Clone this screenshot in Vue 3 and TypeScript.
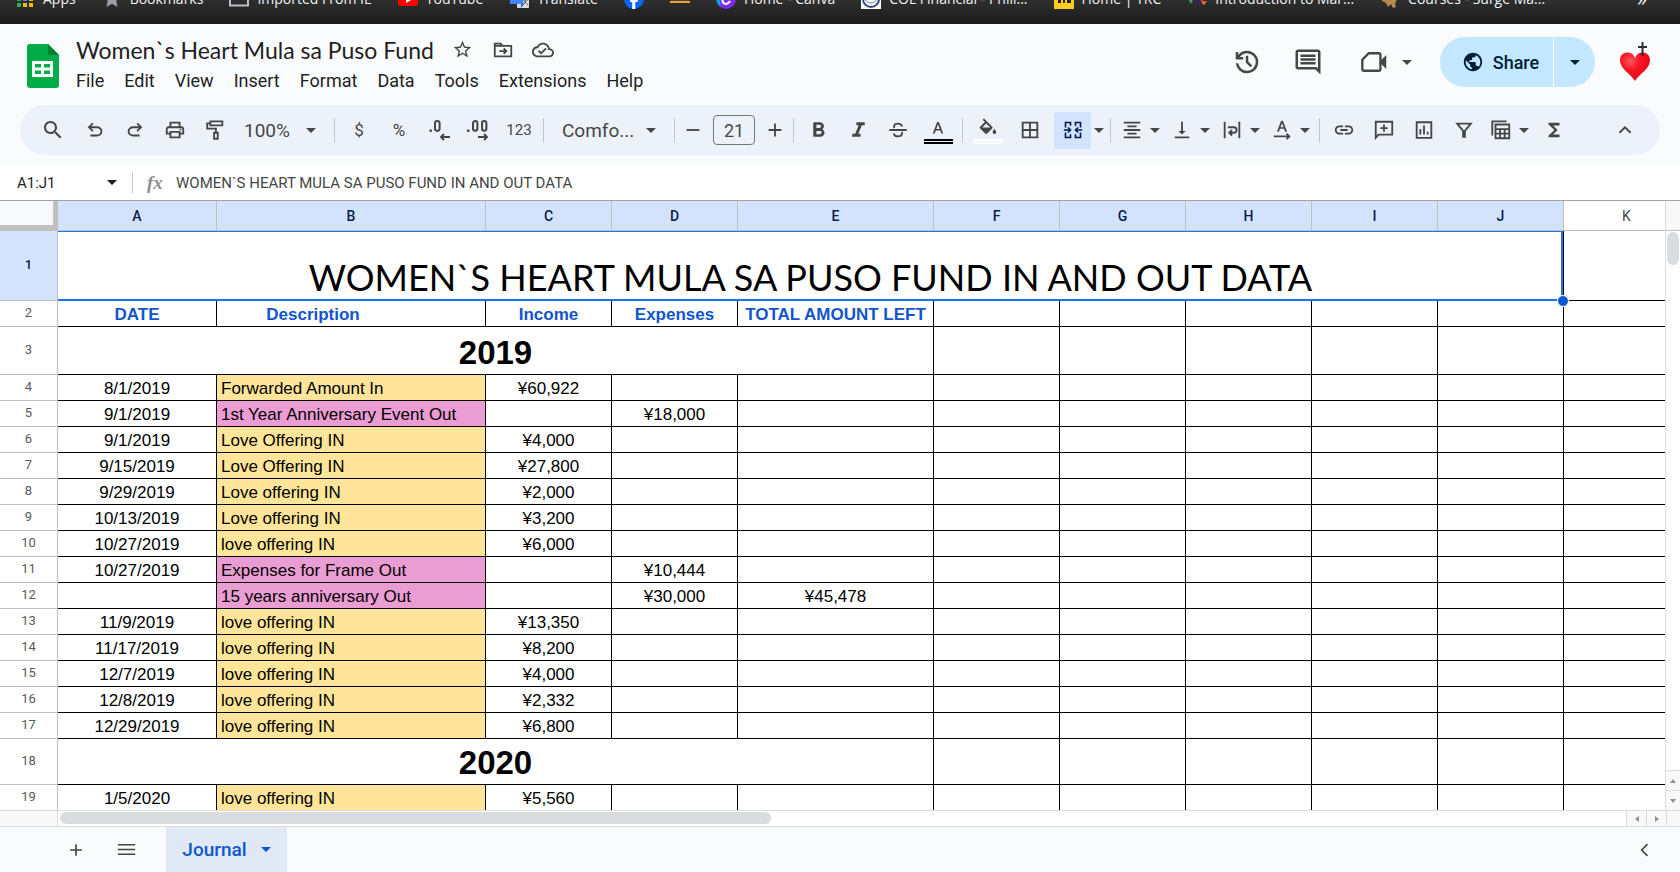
<script setup lang="ts">
import { h, ref } from 'vue'

type Glyph = { fill?: string; line?: string; box?: string }

const glyphs: Record<string, Glyph> = {
  search: { fill: 'M15.5 14h-.79l-.28-.27C15.41 12.59 16 11.11 16 9.5 16 5.91 13.09 3 9.5 3S3 5.91 3 9.5 5.91 16 9.5 16c1.61 0 3.09-.59 4.23-1.57l.27.28v.79l5 4.99L20.49 19l-4.99-5zm-6 0C7.01 14 5 11.99 5 9.5S7.01 5 9.5 5 14 7.01 14 9.5 11.99 14 9.5 14z' },
  undo: { fill: 'M7 19v-2h7.1q1.575 0 2.737-1Q18 15 18 13.5T16.837 11Q15.675 10 14.1 10H7.8l2.6 2.6L9 14 4 9l5-5 1.4 1.4L7.8 8h6.3q2.425 0 4.163 1.575Q20 11.15 20 13.5t-1.737 3.925Q16.525 19 14.1 19Z' },
  redo: { fill: 'M9.9 19q-2.425 0-4.163-1.575Q4 15.85 4 13.5t1.737-3.925Q7.475 8 9.9 8h6.3l-2.6-2.6L15 4l5 5-5 5-1.4-1.4 2.6-2.6H9.9q-1.575 0-2.737 1Q6 12 6 13.5T7.163 16Q8.325 17 9.9 17H17v2Z' },
  print: { fill: 'M19 8h-1V3H6v5H5c-1.66 0-3 1.34-3 3v6h4v4h12v-4h4v-6c0-1.66-1.34-3-3-3zM8 5h8v3H8V5zm8 14H8v-4h8v4zm2-4v-2H6v2H4v-4c0-.55.45-1 1-1h14c.55 0 1 .45 1 1v4h-2zm-1-3.5a1 1 0 1 0 2 0a1 1 0 1 0 -2 0z' },
  paint: { line: 'M7 2.5h13v4.5H7zM7 4.7H3.5v5.8h9.5v4M11 15h4v6.5h-4z' },
  decLess: { fill: 'M2.5 11.5h2.4v2.4H2.5z', line: 'M8 5.2a2.3 2.3 0 0 1 4.6 0v5.4a2.3 2.3 0 0 1-4.6 0zM23 19h-9M17 16l-3 3 3 3' },
  decMore: { fill: 'M0 11.5h2.4v2.4H0z', line: 'M6 5.2a2.2 2.2 0 0 1 4.4 0v5.4a2.2 2.2 0 0 1-4.4 0zM15 5.2a2.2 2.2 0 0 1 4.4 0v5.4a2.2 2.2 0 0 1-4.4 0zM11 19h9M17 16l3 3-3 3' },
  minus: { line: 'M5 12h14' },
  plus: { line: 'M12 5v14M5 12h14' },
  bold: { fill: 'M15.6 10.79c.97-.67 1.65-1.77 1.65-2.79 0-2.26-1.75-4-4-4H7v14h7.04c2.09 0 3.71-1.7 3.71-3.79 0-1.52-.86-2.82-2.15-3.42zM10 6.5h3c.83 0 1.5.67 1.5 1.5s-.67 1.5-1.5 1.5h-3v-3zm3.5 9H10v-3h3.5c.83 0 1.5.67 1.5 1.5s-.67 1.5-1.5 1.5z' },
  italic: { fill: 'M10 4v3h2.21l-3.42 8H6v3h8v-3h-2.21l3.42-8H18V4z' },
  strike: { line: 'M2.5 12h19M16.5 8.2C16 6.300 14.500 5 12 5 9.500 5 7.700 6.300 7.700 8.300c0 .6.100 1 .4 1.500M7.300 15.800C7.800 17.900 9.500 19 12 19c2.700 0 4.400-1.300 4.400-3.400 0-.6-.1-1-.3-1.400' },
  textColor: { box: '0 -4 24 24', fill: 'M11 1.500h2L17.700 14h-2.100l-1.200-3.300H9.600L8.400 14H6.300zM10.200 9h3.600L12 4z' },
  fillColor: { box: '0 -3 24 24', fill: 'M16.560 7.500 7.620-1.400 6.200 0l2.400 2.400-5.200 5.100a1.500 1.500 0 0 0 0 2.100l5.500 5.500c.3.300.7.400 1.100.4s.8-.1 1.100-.4l5.500-5.500c.5-.600.5-1.500 0-2.100zM5.600 8.500 10 4.100l4.400 4.400zM19 10s-2 2.200-2 3.500a2 2 0 0 0 4 0c0-1.300-2-3.500-2-3.500z' },
  borders: { fill: 'M3 3v18h18V3H3zm8 16H5v-6h6v6zm0-8H5V5h6v6zm8 8h-6v-6h6v6zm0-8h-6V5h6v6z' },
  merge: { line: 'M3 9V3h6v4M21 9V3h-6v4M3 15v6h6v-4M21 15v6h-6v-4M1 12h8M6 9l3 3-3 3M23 12h-8M18 9l-3 3 3 3' },
  align: { fill: 'M7 15v2h10v-2H7zm-4 6h18v-2H3v2zm0-8h18v-2H3v2zm4-6v2h10V7H7zM3 3v2h18V3H3z' },
  valign: { fill: 'M16 13h-3V3h-2v10H8l4 4 4-4zM4 19v2h16v-2H4z' },
  wrap: { line: 'M4 3v18M20 3v18M7.500 9h6.500a3 3 0 0 1 0 6h-5M12 12l-3 3 3 3' },
  rotate: { fill: 'M11 2h2l4.500 12h-2.100l-1.200-3.300H9.800L8.600 14H6.500zM10.300 9h3.400L12 4.500z', line: 'M3 19h16M17 16l3 3-3 3' },
  link: { fill: 'M3.900 12c0-1.710 1.390-3.100 3.100-3.100h4V7H7c-2.760 0-5 2.240-5 5s2.240 5 5 5h4v-1.900H7c-1.710 0-3.100-1.390-3.100-3.100zM8 13h8v-2H8v2zm9-6h-4v1.900h4c1.710 0 3.100 1.390 3.100 3.100s-1.390 3.100-3.100 3.100h-4V17h4c2.760 0 5-2.240 5-5s-2.240-5-5-5z' },
  addComment: { line: 'M3 3h18v14H6l-3 3.500zM12 6v8M8 10h8' },
  chart: { line: 'M4 3.500h16v17H4zM8 17v-6M12 17V7M16 17v-3' },
  filter: { line: 'M4.500 5h15L13 13v6.500h-2V13z' },
  tables: { line: 'M6 6h15v15H6zM2.500 18V2.500H18M6 11h15M6 16h15M11 11v10M16 11v10' },
  sigma: { fill: 'M18 4H6v2l6.500 6L6 18v2h12v-3h-7l5-5-5-5h7z' },
  up: { line: 'M6 15l6-6 6 6' },
  left: { line: 'M15 5l-7 7 7 7' },
  caret: { fill: 'M0 0h10L5 5z', box: '0 0 10 5' },
  star: { fill: 'M22 9.240l-7.190-.620L12 2 9.190 8.630 2 9.240l5.460 4.730L5.820 21 12 17.270 18.180 21l-1.630-7.030L22 9.240zM12 15.400l-3.760 2.270 1-4.280-3.320-2.880 4.380-.380L12 6.100l1.710 4.040 4.380.380-3.320 2.880 1 4.280L12 15.400z' },
  folder: { line: 'M3 5h6.500l2 2.500H21V19H3zM3 7.500h9M8 13.200h7.500M12.700 10.300l3 2.900-3 2.900' },
  cloud: { fill: 'M19.350 10.040C18.670 6.590 15.640 4 12 4 9.110 4 6.600 5.640 5.350 8.040 2.340 8.360 0 10.910 0 14c0 3.310 2.690 6 6 6h13c2.760 0 5-2.240 5-5 0-2.640-2.050-4.780-4.650-4.960zM19 18H6c-2.210 0-4-1.790-4-4s1.790-4 4-4h.710C7.370 7.690 9.480 6 12 6c3.040 0 5.500 2.460 5.500 5.500v.500H19c1.660 0 3 1.340 3 3s-1.340 3-3 3zm-9-3.820l-2.090-2.090L6.500 13.500 10 17l6.010-6.010-1.410-1.410z' },
  history: { fill: 'M12 21q-3.450 0-6.013-2.288Q3.425 16.425 3.050 13H5.100q.35 2.600 2.313 4.300Q9.375 19 12 19q2.925 0 4.963-2.038Q19 14.925 19 12t-2.037-4.963Q14.925 5 12 5q-1.725 0-3.225.8T6.250 8H9v2H3V4h2v2.350q1.275-1.600 3.113-2.475Q9.950 3 12 3q1.875 0 3.513.713 1.637.712 2.850 1.924 1.212 1.213 1.925 2.850Q21 10.125 21 12t-.712 3.513q-.713 1.637-1.925 2.850-1.213 1.212-2.850 1.925Q13.875 21 12 21Zm2.800-4.800L11 12.400V7h2v4.600l3.200 3.200Z' },
  comments: { fill: 'M21.990 4c0-1.100-.890-2-1.990-2H4c-1.100 0-2 .900-2 2v12c0 1.100.900 2 2 2h14l4 4-.010-18zM20 4v13.170L18.830 16H4V4h16zM6 12h12v2H6zm0-3h12v2H6zm0-3h12v2H6z' },
  video: { fill: 'M18 10.500L22.500 6v12L18 13.500z', line: 'M7.500 4.500H16a1.500 1.500 0 0 1 1.500 1.500v12a1.500 1.500 0 0 1-1.500 1.500H3.500A1.500 1.500 0 0 1 2 18v-8z' },
  globe: { fill: 'M12 2C6.480 2 2 6.480 2 12s4.480 10 10 10 10-4.480 10-10S17.520 2 12 2zm-1 17.930c-3.950-.490-7-3.850-7-7.930 0-.620.080-1.210.210-1.790L9 15v1c0 1.100.900 2 2 2v1.930zm6.900-2.540c-.260-.810-1-1.390-1.900-1.390h-1v-3c0-.550-.450-1-1-1H8v-2h2c.550 0 1-.450 1-1V7h2c1.100 0 2-.900 2-2v-.410c2.930 1.190 5 4.060 5 7.410 0 2.080-.800 3.970-2.100 5.390z' },
  list: { line: 'M1 6h22M1 12h22M1 18h22' },
}

const Icon = (props: { name: string; size?: number }) => {
  const g = glyphs[props.name]
  const size = props.size ?? 22
  const isCaret = props.name === 'caret'
  return h('svg', {
    viewBox: g.box ?? '0 0 24 24',
    width: isCaret ? 10 : size,
    height: isCaret ? 5 : size,
    'aria-hidden': 'true',
    class: 'icon',
  }, [
    g.fill ? h('path', { d: g.fill, fill: 'currentColor', 'fill-rule': 'evenodd' }) : null,
    g.line ? h('path', { d: g.line, fill: 'none', stroke: 'currentColor', 'stroke-width': 2 }) : null,
  ])
}
Icon.props = ['name', 'size']

const menus = ['File', 'Edit', 'View', 'Insert', 'Format', 'Data', 'Tools', 'Extensions', 'Help']

const bookmarks = [
  { icon: 'apps', text: 'Apps' },
  { icon: 'star', text: 'Bookmarks' },
  { icon: 'folder', text: 'Imported From IE' },
  { icon: 'youtube', text: 'YouTube' },
  { icon: 'translate', text: 'Translate' },
  { icon: 'facebook', text: '' },
  { icon: 'shop', text: '' },
  { icon: 'canva', text: 'Home - Canva' },
  { icon: 'col', text: 'COL Financial - Phili...' },
  { icon: 'trc', text: 'Home | TRC' },
  { icon: 'intro', text: 'Introduction to Mar...' },
  { icon: 'surge', text: 'Courses - Surge Ma...' },
]

const columns = ['A', 'B', 'C', 'D', 'E', 'F', 'G', 'H', 'I', 'J', 'K']

type Entry = { n: number; date?: string; text?: string; kind?: 'in' | 'out'; income?: string; expense?: string; total?: string; year?: string }

const entries: Entry[] = [
  { n: 3, year: '2019' },
  { n: 4, date: '8/1/2019', text: 'Forwarded Amount In', kind: 'in', income: '¥60,922' },
  { n: 5, date: '9/1/2019', text: '1st Year Anniversary Event Out', kind: 'out', expense: '¥18,000' },
  { n: 6, date: '9/1/2019', text: 'Love Offering IN', kind: 'in', income: '¥4,000' },
  { n: 7, date: '9/15/2019', text: 'Love Offering IN', kind: 'in', income: '¥27,800' },
  { n: 8, date: '9/29/2019', text: 'Love offering IN', kind: 'in', income: '¥2,000' },
  { n: 9, date: '10/13/2019', text: 'Love offering IN', kind: 'in', income: '¥3,200' },
  { n: 10, date: '10/27/2019', text: 'love offering IN', kind: 'in', income: '¥6,000' },
  { n: 11, date: '10/27/2019', text: 'Expenses for Frame Out', kind: 'out', expense: '¥10,444' },
  { n: 12, date: '', text: '15 years anniversary Out', kind: 'out', expense: '¥30,000', total: '¥45,478' },
  { n: 13, date: '11/9/2019', text: 'love offering IN', kind: 'in', income: '¥13,350' },
  { n: 14, date: '11/17/2019', text: 'love offering IN', kind: 'in', income: '¥8,200' },
  { n: 15, date: '12/7/2019', text: 'love offering IN', kind: 'in', income: '¥4,000' },
  { n: 16, date: '12/8/2019', text: 'love offering IN', kind: 'in', income: '¥2,332' },
  { n: 17, date: '12/29/2019', text: 'love offering IN', kind: 'in', income: '¥6,800' },
  { n: 18, year: '2020' },
  { n: 19, date: '1/5/2020', text: 'love offering IN', kind: 'in', income: '¥5,560' },
]

const fontSize = ref('21')
const formula = ref('WOMEN`S HEART MULA SA PUSO FUND IN AND OUT DATA')
</script>

<template>
  <div class="page">
    <nav class="bookmarks" aria-label="Bookmarks">
      <div class="bookmark-row">
        <a v-for="b in bookmarks" :key="b.icon" href="#" class="bookmark" :aria-label="b.text || b.icon">
          <svg class="favicon" viewBox="0 0 20 20" aria-hidden="true">
            <template v-if="b.icon === 'apps'">
              <path d="M2 2h4v4H2zM8 2h4v4H8zM14 2h4v4h-4z" fill="#ea4335" />
              <path d="M2 8h4v4H2z" fill="#34a853" /><path d="M8 8h4v4H8z" fill="#4285f4" />
              <path d="M14 8h4v4h-4z" fill="#fbbc04" /><path d="M2 14h4v4H2z" fill="#34a853" />
              <path d="M8 14h4v4H8zM14 14h4v4h-4z" fill="#fbbc04" />
            </template>
            <path v-else-if="b.icon === 'star'" d="M10 1l2.700 6 6.300.6-4.800 4.200L15.600 18 10 14.700 4.400 18l1.400-6.200L1 7.600 7.300 7z" fill="#9aa0a6" />
            <path v-else-if="b.icon === 'folder'" d="M1 3h7l2 2h9v11.500H1z" fill="none" stroke="#bdc1c6" stroke-width="2" />
            <template v-else-if="b.icon === 'youtube'">
              <rect y="3" width="20" height="14" rx="3" fill="#f00" /><path d="M8 7l6 3.500-6 3.500z" fill="#fff" />
            </template>
            <template v-else-if="b.icon === 'translate'">
              <rect x="8" y="6" width="12" height="13" rx="1" fill="#dadce0" />
              <path d="M1 1h10l4 14H1z" fill="#4285f4" /><path d="M12 15h3l-3 4z" fill="#1a5fd0" />
              <path d="M14 11h5M17 10c0 3-1 4-3 6M15 12l4 4" stroke="#5f6368" fill="none" />
            </template>
            <template v-else-if="b.icon === 'facebook'">
              <circle cx="10" cy="10" r="10" fill="#0866ff" />
              <path d="M8.200 20v-7H6v-3h2.200V8c0-2.500 1.300-4 4-4h1.800v3h-1.500c-.9 0-1.200.5-1.200 1.300V10H14l-.4 3h-2.300v7z" fill="#fff" />
            </template>
            <template v-else-if="b.icon === 'shop'">
              <path d="M1 10h18v2H1z" fill="#22516b" /><path d="M0 12h20v2H0z" fill="#ff9d16" />
            </template>
            <template v-else-if="b.icon === 'canva'">
              <circle cx="10" cy="10" r="10" fill="#7d2ae8" /><path d="M1 6a10 10 0 0 0 4 12C3 13 5 6 9 0 5 0 2 3 1 6z" fill="#00a8d8" />
              <path d="M14 7c-1-4-7-2-7.500 4-.2 5 5 5 7.500 1" stroke="#fff" stroke-width="2" fill="none" />
            </template>
            <template v-else-if="b.icon === 'col'">
              <rect width="20" height="20" fill="#fff" />
              <ellipse cx="10" cy="10" rx="8" ry="8" fill="none" stroke="#31507f" stroke-width="2" />
              <ellipse cx="10" cy="9" rx="6" ry="5" fill="none" stroke="#6f88ad" />
            </template>
            <template v-else-if="b.icon === 'trc'">
              <rect width="20" height="20" fill="#ffc926" /><path d="M4 11h3v3H4zM9 11h2v3H9zM13 11h4v3h-4z" fill="#222" />
            </template>
            <template v-else-if="b.icon === 'intro'">
              <path d="M0 8h7l-3 7z" fill="#34a853" /><path d="M6 15l4-7 3 7z" fill="#3b1f5b" />
              <path d="M11 8h5l1 8z" fill="#e0217d" /><path d="M14 13l6-1-3 4z" fill="#f4792b" />
            </template>
            <path v-else d="M2 8l6 2 4-2 5 2-2 5 1 3-3 1-2-4-3 3-2-4-4-2z" fill="#b58a4b" />
          </svg>
          <span v-if="b.text">{{ b.text }}</span>
        </a>
        <button class="more" aria-label="More bookmarks">»</button>
      </div>
    </nav>

    <header class="header">
      <svg class="logo" viewBox="0 0 32 44" aria-hidden="true">
        <path d="M3 0h18l11 11v30a3 3 0 0 1-3 3H3a3 3 0 0 1-3-3V3a3 3 0 0 1 3-3z" fill="#00ac47" />
        <path d="M21 0l11 11H21z" fill="#00832d" />
        <path d="M5 17h21v16H5zM8 20v3.500h6V20zM17 20v3.500h6V20zM8 26.500V30h6v-3.500zM17 26.500V30h6v-3.500z" fill="#fff" fill-rule="evenodd" />
      </svg>
      <div class="titles">
        <div class="title-row">
          <h1>Women`s Heart Mula sa Puso Fund</h1>
          <button aria-label="Star"><Icon name="star" :size="21" /></button>
          <button aria-label="Move"><Icon name="folder" /></button>
          <button aria-label="Saved to Drive"><Icon name="cloud" /></button>
        </div>
        <nav class="menus" aria-label="Menu bar">
          <button v-for="m in menus" :key="m">{{ m }}</button>
        </nav>
      </div>
      <div class="actions">
        <button aria-label="Version history"><Icon name="history" :size="30" /></button>
        <button aria-label="Comments"><Icon name="comments" :size="30" /></button>
        <button class="meet" aria-label="Join a call"><Icon name="video" :size="28" /><Icon name="caret" /></button>
        <div class="share">
          <button class="share-main"><Icon name="globe" :size="22" />Share</button>
          <button class="share-more" aria-label="Share options"><Icon name="caret" /></button>
        </div>
        <button class="avatar" aria-label="Account">
          <svg viewBox="0 0 32 40" width="32" height="40" aria-hidden="true">
            <defs>
              <radialGradient id="heart" cx=".35" cy=".3" r=".8">
                <stop offset="0" stop-color="#ff5a5f" /><stop offset=".4" stop-color="#fb1322" /><stop offset="1" stop-color="#d80a18" />
              </radialGradient>
            </defs>
            <path d="M16 39C13 33 1 27 1 18.500C1 9 13 8 16 16C19 8 31 9 31 18.500C31 27 19 33 16 39z" fill="url(#heart)" />
            <path d="M23.500 0v14M19 5h9" stroke="#2b2b33" stroke-width="2" />
          </svg>
        </button>
      </div>
    </header>

    <div class="toolbar" role="toolbar" aria-label="Main toolbar">
      <button class="tool first" aria-label="Search menus"><Icon name="search" :size="24" /></button>
      <button class="tool" aria-label="Undo"><Icon name="undo" /></button>
      <button class="tool" aria-label="Redo"><Icon name="redo" /></button>
      <button class="tool" aria-label="Print"><Icon name="print" /></button>
      <button class="tool" aria-label="Paint format"><Icon name="paint" /></button>
      <label class="pick zoom"><select aria-label="Zoom"><option>100%</option></select><Icon name="caret" /></label>
      <i class="sep"></i>
      <button class="tool sym">$</button>
      <button class="tool sym">%</button>
      <button class="tool" aria-label="Decrease decimal places"><Icon name="decLess" :size="24" /></button>
      <button class="tool" aria-label="Increase decimal places"><Icon name="decMore" :size="24" /></button>
      <button class="tool small">123</button>
      <i class="sep"></i>
      <label class="pick font"><select aria-label="Font"><option>Comfo...</option></select><Icon name="caret" /></label>
      <i class="sep"></i>
      <div class="size">
        <button aria-label="Decrease font size"><Icon name="minus" /></button>
        <input v-model="fontSize" aria-label="Font size" />
        <button aria-label="Increase font size"><Icon name="plus" /></button>
      </div>
      <i class="sep"></i>
      <button class="tool" aria-label="Bold"><Icon name="bold" :size="25" /></button>
      <button class="tool" aria-label="Italic"><Icon name="italic" :size="25" /></button>
      <button class="tool" aria-label="Strikethrough"><Icon name="strike" /></button>
      <button class="tool color" aria-label="Text color"><Icon name="textColor" /></button>
      <i class="sep"></i>
      <button class="tool wide color fill-color" aria-label="Fill color"><Icon name="fillColor" /></button>
      <button class="tool wide" aria-label="Borders"><Icon name="borders" :size="22" /></button>
      <button class="tool active" aria-label="Merge cells"><Icon name="merge" :size="20" /></button>
      <button class="drop" aria-label="Merge options"><Icon name="caret" /></button>
      <i class="sep"></i>
      <button v-for="t in ['align', 'valign', 'wrap', 'rotate']" :key="t" class="pair" :aria-label="t">
        <Icon :name="t" /><Icon name="caret" />
      </button>
      <i class="sep"></i>
      <button class="tool" aria-label="Insert link"><Icon name="link" /></button>
      <button class="tool" aria-label="Insert comment"><Icon name="addComment" /></button>
      <button class="tool" aria-label="Insert chart"><Icon name="chart" /></button>
      <button class="tool" aria-label="Create a filter"><Icon name="filter" /></button>
      <button class="pair" aria-label="Filter views"><Icon name="tables" /><Icon name="caret" /></button>
      <button class="tool" aria-label="Functions"><Icon name="sigma" /></button>
      <button class="tool hide" aria-label="Hide the menus"><Icon name="up" /></button>
    </div>

    <div class="formula">
      <button class="name-box">A1:J1<Icon name="caret" /></button>
      <i class="sep"></i>
      <label class="fx" for="formula-input">fx</label>
      <input id="formula-input" v-model="formula" class="formula-input" />
    </div>

    <main class="grid">
      <div class="sheet">
        <table>
          <colgroup>
            <col class="c-head"><col class="c-a"><col class="c-b"><col class="c-n"><col class="c-n"><col class="c-e">
            <col v-for="i in 6" :key="i" class="c-n">
          </colgroup>
          <thead>
            <tr>
              <td class="corner"></td>
              <th v-for="c in columns" :key="c" scope="col" :class="{ picked: c !== 'K' }">{{ c }}</th>
            </tr>
          </thead>
          <tbody>
            <tr class="r-title">
              <th scope="row" class="picked">1</th>
              <td colspan="10" class="selected">WOMEN`S HEART MULA SA PUSO FUND IN AND OUT DATA<span class="handle"></span></td>
              <td></td>
            </tr>
            <tr class="r-labels">
              <th scope="row">2</th>
              <td>DATE</td><td class="desc">Description</td><td>Income</td><td>Expenses</td><td>TOTAL AMOUNT LEFT</td>
              <td v-for="i in 6" :key="i"></td>
            </tr>
            <tr v-for="e in entries" :key="e.n" :class="{ 'r-year': e.year, later: e.year === '2020' }">
              <th scope="row">{{ e.n }}</th>
              <td v-if="e.year" colspan="5">{{ e.year }}</td>
              <template v-else>
                <td>{{ e.date }}</td>
                <td :class="e.kind">{{ e.text }}</td>
                <td>{{ e.income }}</td>
                <td>{{ e.expense }}</td>
                <td>{{ e.total }}</td>
              </template>
              <td v-for="i in 6" :key="i"></td>
            </tr>
          </tbody>
        </table>
      </div>
      <div class="vscroll">
        <div class="vtop"></div>
        <div class="vthumb"></div>
        <button class="vbtn" aria-label="Scroll up"><svg width="6" height="4" viewBox="0 0 6 4"><path d="M0 4l3-4 3 4z" /></svg></button>
        <button class="vbtn" aria-label="Scroll down"><svg width="6" height="4" viewBox="0 0 6 4"><path d="M0 0h6L3 4z" /></svg></button>
      </div>
    </main>

    <div class="hscroll">
      <div class="hhead"></div>
      <div class="htrack"><div class="hthumb"></div></div>
      <button class="hbtn" aria-label="Scroll left"><svg width="4" height="6" viewBox="0 0 4 6"><path d="M4 0v6L0 3z" /></svg></button>
      <button class="hbtn" aria-label="Scroll right"><svg width="4" height="6" viewBox="0 0 4 6"><path d="M0 0l4 3-4 3z" /></svg></button>
      <div class="hend"></div>
    </div>

    <footer class="tabs">
      <button class="tab-tool" aria-label="Add sheet"><Icon name="plus" :size="20" /></button>
      <button class="tab-tool" aria-label="All sheets"><Icon name="list" :size="19" /></button>
      <button class="tab">Journal<Icon name="caret" /></button>
      <button class="tab-tool side" aria-label="Show side panel"><Icon name="left" :size="20" /></button>
    </footer>
  </div>
</template>

<style>
body {
  margin: 0;
  overflow: hidden;
}
</style>

<style scoped>
.page {
  display: flex;
  flex-direction: column;
  height: 100vh;
  background: #f9fbfd;
  color: #444746;
  font-family: Roboto, "Liberation Sans", sans-serif;
}
button,
input,
select {
  padding: 0;
  border: 0;
  background: none;
  color: inherit;
  font: inherit;
}
button {
  display: flex;
  align-items: center;
  justify-content: center;
}
.icon {
  display: block;
  flex: none;
  overflow: visible;
}

.bookmarks {
  flex: none;
  height: 24px;
  overflow: hidden;
  background: linear-gradient(#2f2f2f, #1c1c1c);
}
.bookmark-row {
  display: flex;
  align-items: center;
  gap: 26px;
  height: 32px;
  margin-top: -17px;
  padding: 0 33px 0 15px;
  font: 14px/20px "Open Sans", sans-serif;
  color: #f1f3f4;
}
.bookmark {
  display: flex;
  align-items: center;
  gap: 8px;
  color: inherit;
  text-decoration: none;
  white-space: nowrap;
}
.favicon {
  flex: none;
  width: 20px;
  height: 20px;
}
.more {
  margin-left: auto;
  font-size: 20px;
}

.header {
  display: flex;
  flex: none;
  height: 81px;
  padding: 0 27px;
}
.logo {
  flex: none;
  width: 32px;
  height: 44px;
  margin-top: 20px;
}
.titles {
  margin: 10px 0 0 17px;
}
.title-row {
  display: flex;
  align-items: center;
  height: 31px;
}
.title-row button {
  width: 40px;
}
h1 {
  margin: 0 9px 0 0;
  color: #1f1f1f;
  font: 400 23px/30px Lato, sans-serif;
  white-space: nowrap;
}
.menus {
  display: flex;
  gap: 20px;
  height: 30px;
  color: #1f1f1f;
  font-size: 18px;
}
.actions {
  display: flex;
  align-items: center;
  height: 50px;
  margin: 13px 0 0 auto;
}
.actions > button {
  width: 61px;
}
.actions > .meet {
  gap: 14px;
  width: 79px;
  padding-left: 16px;
}
.share {
  display: flex;
  gap: 1px;
  height: 50px;
  margin: 0 22px 0 23px;
  color: #001d35;
  font-size: 18px;
  font-weight: 500;
}
.share button {
  background: #c2e7ff;
}
.share-main {
  gap: 9px;
  width: 113px;
  padding-left: 8px;
  border-radius: 25px 0 0 25px;
}
.share-more {
  width: 41px;
  border-radius: 0 25px 25px 0;
}
.actions > .avatar {
  width: 36px;
}

.toolbar {
  display: flex;
  flex: none;
  align-items: center;
  height: 50px;
  margin: 0 20px 10px;
  padding: 0 15px 0 11px;
  border-radius: 25px;
  background: #edf2fa;
}
.tool {
  flex: none;
  width: 40px;
  height: 37px;
}
.first {
  width: 44px;
}
.wide {
  width: 42px;
}
.sep {
  flex: none;
  width: 1px;
  height: 25px;
  margin: 0 4px;
  background: #c7c7c7;
}
.pick {
  display: flex;
  position: relative;
  align-items: center;
  height: 37px;
  font-size: 19px;
}
.pick select {
  width: 100%;
  appearance: none;
}
.pick svg {
  position: absolute;
  right: 14px;
  pointer-events: none;
}
.zoom {
  width: 95px;
}
.zoom select {
  padding-left: 9px;
}
.font {
  width: 122px;
}
.font select {
  padding-left: 14px;
}
.sym {
  font-size: 17px;
}
.small {
  font-size: 15px;
}
.size {
  display: flex;
  align-items: center;
  gap: 6px;
}
.size button {
  width: 28px;
}
.size input {
  box-sizing: border-box;
  width: 42px;
  height: 30px;
  border: 1px solid #747775;
  border-radius: 4px;
  font-size: 18px;
  text-align: center;
}
.color {
  flex-direction: column;
}
.color::after {
  width: 29px;
  height: 1px;
  border: solid #000;
  border-width: 2px 0;
  content: "";
}
.fill-color::after {
  border-color: #fff;
}
.active {
  width: 37px;
  margin-left: 3px;
  border-radius: 4px 0 0 4px;
  background: #d3e3fd;
  color: #041e49;
}
.drop {
  width: 15px;
  height: 37px;
}
.pair {
  flex: none;
  gap: 7px;
  width: 50px;
  height: 37px;
}
.hide {
  margin-left: auto;
}

.formula {
  display: flex;
  flex: none;
  align-items: center;
  height: 35px;
  border-bottom: 1px solid #a3a3a3;
  background: #fff;
}
.name-box {
  justify-content: space-between;
  width: 128px;
  padding: 0 11px 0 17px;
  color: #1f1f1f;
  font-size: 15px;
}
.formula .sep {
  height: 21px;
}
.fx {
  width: 24px;
  padding-left: 10px;
  color: #8f8f8f;
  font: italic 700 19px/24px "Liberation Serif", serif;
}
.formula-input {
  flex: 1;
  padding: 0 5px;
  font: 15px/24px Roboto, sans-serif;
}

.grid {
  display: flex;
  flex: 1;
  min-height: 0;
  background: #fff;
}
.sheet {
  flex: 1;
  min-width: 0;
  overflow: hidden;
}
table {
  width: 1690px;
  border-spacing: 0;
  table-layout: fixed;
  color: #000;
  font: 17px/20px "Liberation Sans", Arial, sans-serif;
}
.c-head {
  width: 58px;
}
.c-a {
  width: 159px;
}
.c-b {
  width: 269px;
}
.c-n {
  width: 126px;
}
.c-e {
  width: 196px;
}
th,
td {
  box-sizing: border-box;
  padding: 0;
  white-space: nowrap;
}
thead th {
  height: 30px;
  border: solid #c0c0c0;
  border-width: 0 1px 1px 0;
  color: #444746;
  font: 14px/20px Roboto, sans-serif;
}
thead .picked {
  background: #d3e3fd;
  color: #041e49;
  font-weight: 500;
}
.corner {
  border: solid #c0c0c0;
  border-width: 0 5px 6px 0;
  background: #f8f9fa;
}
tbody th {
  height: 26px;
  padding-bottom: 2px;
  border: solid #c0c0c0;
  border-width: 0 1px 1px 0;
  color: #575a5a;
  font: 13px/16px Roboto, sans-serif;
  vertical-align: middle;
}
tbody .picked {
  background: #d3e3fd;
  color: #041e49;
  font-weight: 500;
}
tbody td {
  padding-bottom: 1px;
  border: solid #000;
  border-width: 0 1px 1px 0;
  text-align: center;
  vertical-align: bottom;
}
tbody td:last-child {
  border-right: 0;
}
.r-title th {
  height: 70px;
}
.r-title .selected {
  position: relative;
  padding-bottom: 3px;
  font: 36px/40px Lato, sans-serif;
}
.selected::after {
  position: absolute;
  inset: 0 0 -1px;
  border: solid #1a73e8;
  border-width: 1px 2px 2px 0;
  content: "";
}
.handle {
  position: absolute;
  right: -6px;
  bottom: -7px;
  z-index: 1;
  width: 10px;
  height: 10px;
  border: 1px solid #fff;
  border-radius: 50%;
  background: #0b57d0;
}
.r-labels td {
  color: #1155cc;
  font-weight: 700;
}
.r-labels .desc {
  padding-right: 76px;
}
.r-year th {
  height: 48px;
}
.later th {
  height: 46px;
}
.r-year td {
  padding-bottom: 2px;
  font-size: 33px;
  font-weight: 700;
  line-height: 38px;
}
.in,
.out {
  padding-left: 4px;
  background: #ffe599;
  text-align: left;
}
.out {
  background: #ea9dd3;
}

.vscroll {
  display: flex;
  flex: none;
  flex-direction: column;
  width: 14px;
  border-left: 1px solid #dadce0;
}
.vtop {
  height: 29px;
  border-bottom: 1px solid #c0c0c0;
  background: #f8f8f8;
}
.vthumb {
  width: 12px;
  height: 33px;
  margin: 1px 1px auto;
  border-radius: 6px;
  background: #dadce0;
}
.vbtn,
.hbtn {
  flex: none;
  background: #f8f8f8;
  fill: #8f8f8f;
}
.vbtn {
  height: 20px;
  border-top: 1px solid #dadce0;
}

.hscroll {
  display: flex;
  flex: none;
  height: 15px;
  border: solid #dadce0;
  border-width: 1px 0;
  background: #fff;
}
.hhead {
  width: 57px;
  border-right: 1px solid #dadce0;
  background: #f8f8f8;
}
.htrack {
  flex: 1;
  padding: 1px 2px;
}
.hthumb {
  width: calc(100% * 5 / 11);
  height: 12px;
  border-radius: 6px;
  background: #dadce0;
}
.hbtn {
  width: 20px;
  border-left: 1px solid #dadce0;
}
.hend {
  width: 13px;
  border-left: 1px solid #dadce0;
  background: #f8f8f8;
}

.tabs {
  display: flex;
  flex: none;
  height: 45px;
  padding: 0 10px 0 51px;
}
.tab-tool {
  width: 50px;
}
.tab {
  gap: 14px;
  width: 121px;
  margin-left: 15px;
  background: #e1e9f7;
  color: #0b57d0;
  font-size: 19px;
  font-weight: 500;
}
.side {
  margin-left: auto;
}
</style>
